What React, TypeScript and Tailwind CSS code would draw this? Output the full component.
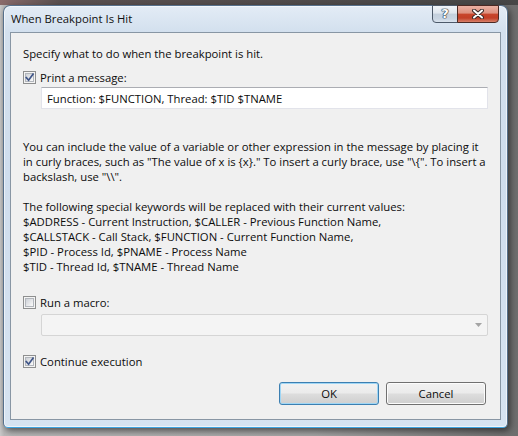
import React from "react";

function CheckBox({ checked }: { checked: boolean }) {
  return (
    <span className="relative flex h-[13px] w-[13px] shrink-0 items-center justify-center border border-[#8e8f8f] bg-[#f4f4f4]">
      <span className="h-[9px] w-[9px] border border-[#b2b6bc] bg-[linear-gradient(135deg,#cdd1d7_0%,#e9eaec_60%,#fbfbfb_100%)]" />
      {checked && (
        <svg className="absolute left-[0px] top-[0px]" width="11" height="11" viewBox="0 0 11 11">
          <path d="M2.3 5.6 L4.6 8.2 L9 2.2" stroke="#3f5588" strokeWidth="1.7" fill="none" strokeLinecap="square" />
        </svg>
      )}
    </span>
  );
}

function CheckRow({ checked, label }: { checked: boolean; label: string }) {
  return (
    <div className="flex h-[15px] items-center gap-[4px]">
      <CheckBox checked={checked} />
      <span className="whitespace-nowrap">{label}</span>
    </div>
  );
}

function WinButton({ label, isDefault }: { label: string; isDefault?: boolean }) {
  return (
    <div
      className={
        isDefault
          ? "flex h-[23px] w-[100px] items-center justify-center rounded-[3px] border border-[#3c7fb1] bg-[linear-gradient(180deg,#f2f2f2_0%,#ebebeb_48%,#dddddd_52%,#cfcfcf_100%)] shadow-[inset_0_0_0_1px_#9fd6f5]"
          : "flex h-[23px] w-[100px] items-center justify-center rounded-[3px] border border-[#707070] bg-[linear-gradient(180deg,#f2f2f2_0%,#ebebeb_48%,#dddddd_52%,#cfcfcf_100%)] shadow-[inset_0_0_0_1px_#fcfcfc]"
      }
    >
      {label}
    </div>
  );
}

export default function App() {
  return (
    <div className="h-[436px] w-[518px] overflow-hidden bg-[linear-gradient(90deg,#c9c9c9_0px,#b9b9b9_4px,#a6a6a6_60%,#6e6e6e_100%)] font-['Open_Sans',sans-serif] text-[11.3px] leading-[15px] text-[#0c0c0c]">
      <div className="h-[5px] w-full bg-[linear-gradient(90deg,#8a6b6b_0px,#5a5050_60px,#474747_100%)]" />
      <div className="pl-[3px]">
        <div className="relative flex h-[423px] w-[505px] flex-col rounded-t-[7px] rounded-b-[5px] border border-[#56708c] border-b-[#3fa4e0] bg-[linear-gradient(180deg,#e3ecf6_0%,#d3e0ee_6%,#cfdded_40%,#d6e3f1_100%)] shadow-[2px_3px_7px_rgba(0,0,0,0.55),inset_0_0_0_1px_rgba(255,255,255,0.6)]">
          {/* caption buttons */}
          <div className="absolute right-[8px] top-[-1px] flex">
            <div className="flex h-[18px] w-[26px] items-center justify-center rounded-bl-[4px] border border-[#4d5a6a] bg-[linear-gradient(180deg,#f1f5f9_0%,#dfe6ee_45%,#c3cfdc_50%,#c9d5e2_80%,#dbe4ee_100%)] font-['DejaVu_Sans',sans-serif] text-[13px] font-bold leading-[16px] text-white [text-shadow:0_0_1px_#2a3440,0_0_1px_#2a3440,0_0_1px_#2a3440,0_0_1px_#2a3440]">
              ?
            </div>
            <div className="-ml-[1px] flex h-[18px] w-[42px] items-center justify-center rounded-br-[4px] border border-[#4b2a24] bg-[linear-gradient(180deg,#eab1a3_0%,#dd907e_45%,#c8462c_50%,#c23f27_75%,#d8816a_100%)]">
              <svg width="12" height="10" viewBox="0 0 12 10">
                <path d="M2 1.5 L10 8.5 M10 1.5 L2 8.5" stroke="#3a2a28" strokeWidth="4" strokeLinecap="round" />
                <path d="M2 1.5 L10 8.5 M10 1.5 L2 8.5" stroke="#ffffff" strokeWidth="2" strokeLinecap="round" />
              </svg>
            </div>
          </div>

          {/* title bar */}
          <div className="h-[26px] pl-[7px] pt-[5px] text-[#101010]">When Breakpoint Is Hit</div>

          {/* client area */}
          <div className="mx-[6px] flex h-[388px] flex-col border border-[#8896a4] bg-[#f0f0f0] px-[12px] pt-[13px]">
            <div className="h-[15px] whitespace-nowrap">Specify what to do when the breakpoint is hit.</div>

            <div className="mt-[9px]">
              <CheckRow checked={true} label="Print a message:" />
            </div>

            <div className="ml-[18px] mt-[2px] flex h-[22px] items-center border border-[#e2e3ea] border-t-[#abadb3] bg-white pl-[5px]">
              <span className="whitespace-nowrap">Function: $FUNCTION, Thread: $TID $TNAME</span>
            </div>

            <div className="mt-[30px] whitespace-nowrap">
              You can include the value of a variable or other expression in the message by placing it
              <br />
              in curly braces, such as &quot;The value of x is {"{x}"}.&quot; To insert a curly brace, use &quot;\{"{"}&quot;. To insert a
              <br />
              backslash, use &quot;\\&quot;.
            </div>

            <div className="mt-[15px] whitespace-nowrap">
              The following special keywords will be replaced with their current values:
              <br />
              $ADDRESS - Current Instruction, $CALLER - Previous Function Name,
              <br />
              $CALLSTACK - Call Stack, $FUNCTION - Current Function Name,
              <br />
              $PID - Process Id, $PNAME - Process Name
              <br />
              $TID - Thread Id, $TNAME - Thread Name
            </div>

            <div className="mt-[21px]">
              <CheckRow checked={false} label="Run a macro:" />
            </div>

            <div className="ml-[18px] mt-[4px] flex h-[22px] items-center justify-end rounded-[2px] border border-[#d5d5d5] bg-[#f4f4f4] pr-[5px]">
              <svg width="7" height="4" viewBox="0 0 7 4">
                <path d="M0 0 L7 0 L3.5 4 Z" fill="#a4a4a4" />
              </svg>
            </div>

            <div className="mt-[18px]">
              <CheckRow checked={true} label="Continue execution" />
            </div>

            <div className="mr-[2px] mt-[13px] flex justify-end gap-[7px]">
              <WinButton label="OK" isDefault />
              <WinButton label="Cancel" />
            </div>
          </div>
        </div>
      </div>
    </div>
  );
}
